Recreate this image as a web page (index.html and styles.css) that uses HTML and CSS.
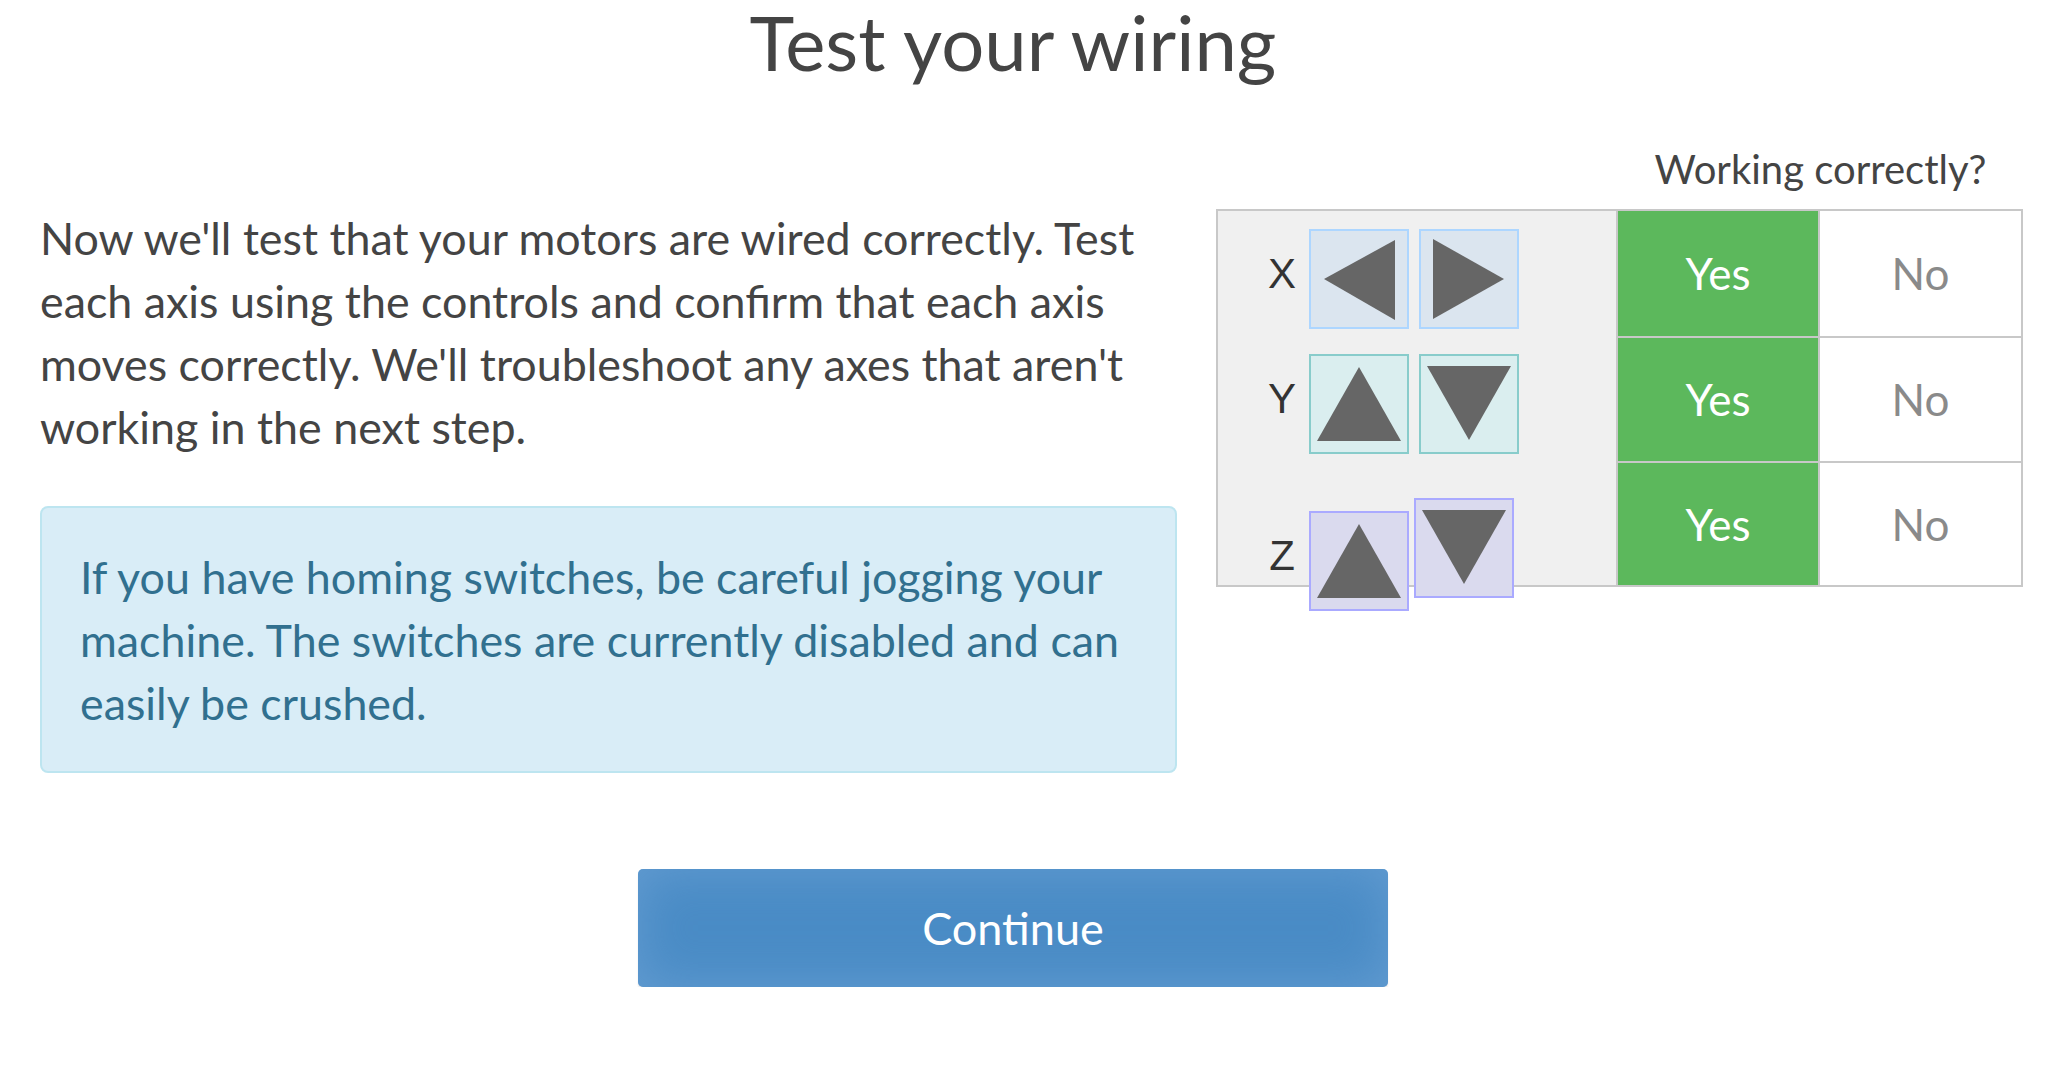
FILE: index.html
```html
<!DOCTYPE html>
<html>
<head>
<meta charset="utf-8">
<title>Test your wiring</title>
<link rel="stylesheet" href="styles.css">
</head>
<body>
<div class="page">
  <h1 class="title">Test your wiring</h1>
  <div class="row">
    <div class="left-col">
      <p class="intro">Now we'll test that your motors are wired correctly. Test each axis using the controls and confirm that each axis moves correctly. We'll troubleshoot any axes that aren't working in the next step.</p>
      <div class="alert">If you have homing switches, be careful jogging your machine. The switches are currently disabled and can easily be crushed.</div>
    </div>
    <div class="right-col">
      <div class="check-head">Working correctly?</div>
      <div class="axis-table">
        <div class="jog-panel">
          <div class="jog-row">
            <span class="axis-label">X</span>
            <button class="jog jog-x"><svg viewBox="0 0 96 96"><polygon points="13,48 84,9 84,89"/></svg></button>
            <button class="jog jog-x"><svg viewBox="0 0 96 96"><polygon points="12,8 12,88 83,48"/></svg></button>
          </div>
          <div class="jog-row">
            <span class="axis-label">Y</span>
            <button class="jog jog-y"><svg viewBox="0 0 96 96"><polygon points="48,11 6,85 90,85"/></svg></button>
            <button class="jog jog-y"><svg viewBox="0 0 96 96"><polygon points="6,10 90,10 48,84"/></svg></button>
          </div>
          <div class="jog-row jog-row-z">
            <span class="axis-label">Z</span>
            <button class="jog jog-z"><svg viewBox="0 0 96 96"><polygon points="48,11 6,85 90,85"/></svg></button>
            <button class="jog jog-z jog-z-down"><svg viewBox="0 0 96 96"><polygon points="6,10 90,10 48,84"/></svg></button>
          </div>
        </div>
        <div class="cell yes">Yes</div>
        <div class="cell no">No</div>
        <div class="cell yes">Yes</div>
        <div class="cell no">No</div>
        <div class="cell yes">Yes</div>
        <div class="cell no">No</div>
      </div>
    </div>
  </div>
  <div class="actions">
    <button class="continue">Continue</button>
  </div>
</div>
</body>
</html>
```
FILE: styles.css
```css
html, body {
  margin: 0;
  padding: 0;
  background: #ffffff;
}
body {
  font-family: Lato, "Open Sans", sans-serif;
  color: #444444;
}
.page {
  padding: 0 74px 0 40px;
}
.title {
  margin: 0;
  font-size: 76px;
  line-height: 1.1;
  font-weight: 400;
  text-align: center;
  color: #444444;
}
.row {
  display: flex;
  align-items: flex-start;
  margin-top: 54px;
}
.left-col {
  flex: 0 0 1137px;
  padding-top: 69px;
}
.intro {
  margin: 0;
  font-size: 44.8px;
  line-height: 63px;
  color: #444444;
}
.alert {
  margin-top: 47px;
  padding: 38px 38px 36px 38px;
  border: 2px solid #bde5f0;
  border-radius: 8px;
  background: #d9edf7;
  color: #31708f;
  font-size: 44.8px;
  line-height: 63px;
}
.right-col {
  flex: 0 0 807px;
  margin-left: 39px;
}
.check-head {
  padding-left: 402px;
  text-align: center;
  font-size: 40px;
  line-height: 63px;
  color: #444444;
}
.axis-table {
  margin-top: 8px;
  display: grid;
  grid-template-columns: 398px 200px 201px;
  grid-template-rows: 125px 123px 122px;
  gap: 2px;
  border: 2px solid #c8c8c8;
  background: #c8c8c8;
}
.jog-panel {
  grid-column: 1;
  grid-row: 1 / span 3;
  background: #f0f0f0;
  padding: 18px 0 0 39px;
}
.jog-row {
  display: flex;
  align-items: center;
  height: 100px;
}
.jog-row + .jog-row {
  margin-top: 25px;
}
.jog-row.jog-row-z {
  margin-top: 57px;
}
.axis-label {
  width: 50px;
  text-align: center;
  font-family: "Liberation Sans", Arial, sans-serif;
  font-size: 42px;
  line-height: 42px;
  color: #333333;
  margin-right: 2px;
  margin-bottom: 9px;
}
.jog {
  box-sizing: border-box;
  width: 100px;
  height: 100px;
  padding: 0;
  margin: 0;
  border: 2px solid;
  display: block;
}
.jog + .jog {
  margin-left: 10px;
}
.jog svg {
  display: block;
  width: 96px;
  height: 96px;
  fill: #666666;
}
.jog-x {
  background: #dbe5ef;
  border-color: #add6ff;
}
.jog-y {
  background: #daeeef;
  border-color: #88cccb;
}
.jog-z {
  background: #dadaee;
  border-color: #aaaaff;
}
.jog + .jog-z-down {
  margin-left: 5px;
  margin-top: -26px;
}
.cell {
  display: flex;
  align-items: center;
  justify-content: center;
  font-size: 44px;
}
.yes {
  background: #5cb85c;
  color: #ffffff;
}
.no {
  background: #ffffff;
  color: #8a8a8a;
}
.actions {
  display: flex;
  justify-content: center;
  margin-top: 96px;
}
.continue {
  width: 750px;
  height: 118px;
  border: none;
  border-radius: 5px;
  background: #4a8cc6;
  box-shadow: inset 0 0 50px rgba(120, 170, 218, 0.55), 0 3px 2px rgba(0, 0, 0, 0.08);
  color: #ffffff;
  font-family: Lato, "Open Sans", sans-serif;
  font-size: 45px;
  padding: 0;
}
```
